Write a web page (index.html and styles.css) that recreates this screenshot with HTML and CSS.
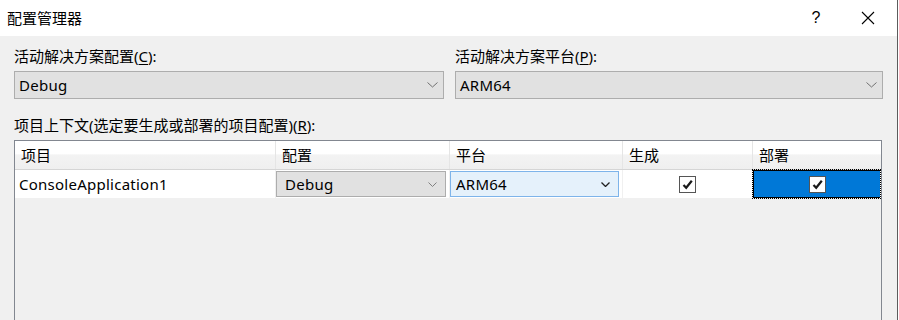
FILE: index.html
```html
<!doctype html>
<html lang="zh-CN">
<head>
    <meta charset="UTF-8">
    <title>配置管理器</title>
    <link rel="stylesheet" href="styles.css">
</head>
<body>
<div class="window">
    <div class="titlebar">
        <span class="title">配置管理器</span>
        <span class="tb-btn help">?</span>
        <span class="tb-btn close">
            <svg width="14" height="14" viewBox="0 0 14 14"><path d="M1 1 L13 13 M13 1 L1 13" stroke="#000" stroke-width="1.1" fill="none"/></svg>
        </span>
    </div>

    <div class="content">
        <div class="top-row">
            <div class="field">
                <label class="lbl">活动解决方案配置(<u>C</u>):</label>
                <div class="combo">
                    <span>Debug</span>
                    <svg class="chev" width="11" height="6" viewBox="0 0 11 6"><path d="M0.5 0.5 L5.5 5 L10.5 0.5" stroke="#707070" fill="none"/></svg>
                </div>
            </div>
            <div class="field">
                <label class="lbl">活动解决方案平台(<u>P</u>):</label>
                <div class="combo">
                    <span>ARM64</span>
                    <svg class="chev" width="11" height="6" viewBox="0 0 11 6"><path d="M0.5 0.5 L5.5 5 L10.5 0.5" stroke="#707070" fill="none"/></svg>
                </div>
            </div>
        </div>

        <label class="lbl ctx">项目上下文(选定要生成或部署的项目配置)(<u>R</u>):</label>

        <div class="grid">
            <div class="row head">
                <div class="cell">项目</div>
                <div class="cell">配置</div>
                <div class="cell">平台</div>
                <div class="cell">生成</div>
                <div class="cell">部署</div>
            </div>
            <div class="row data">
                <div class="cell name">ConsoleApplication1</div>
                <div class="cell">
                    <div class="dd">
                        <span>Debug</span>
                        <svg width="9" height="5" viewBox="0 0 9 5"><path d="M0.5 0.5 L4.5 4.5 L8.5 0.5" stroke="#808080" fill="none"/></svg>
                    </div>
                </div>
                <div class="cell">
                    <div class="dd hot">
                        <span>ARM64</span>
                        <svg width="9" height="5" viewBox="0 0 9 5"><path d="M0.5 0.5 L4.5 4.5 L8.5 0.5" stroke="#202020" stroke-width="1.3" fill="none"/></svg>
                    </div>
                </div>
                <div class="cell check">
                    <span class="box">
                        <svg width="13" height="13" viewBox="0 0 13 13"><path d="M2.5 7 L5.2 9.8 L10.8 2.8" stroke="#1a1a1a" stroke-width="2.2" fill="none"/></svg>
                    </span>
                </div>
                <div class="cell check selected">
                    <span class="box">
                        <svg width="13" height="13" viewBox="0 0 13 13"><path d="M2.5 7 L5.2 9.8 L10.8 2.8" stroke="#1a1a1a" stroke-width="2.2" fill="none"/></svg>
                    </span>
                </div>
            </div>
        </div>
    </div>
</div>
</body>
</html>
```

FILE: styles.css
```css
html, body {
    margin: 0;
    padding: 0;
    background: #fff;
}
body {
    font-family: "Noto Sans", "Noto Sans CJK SC", sans-serif;
    font-size: 15px;
    color: #000;
    width: 899px;
    height: 320px;
    overflow: hidden;
}
.name, .combo span, .dd span {
    letter-spacing: 0.25px;
}
u {
    text-decoration-thickness: 1px;
    text-underline-offset: 2px;
}

.window {
    width: 898px;
    height: 320px;
    box-sizing: border-box;
    border-right: 1px solid #5c5c5c;
    background: #f0f0f0;
    display: flex;
    flex-direction: column;
}

/* title bar */
.titlebar {
    height: 36px;
    flex: none;
    background: #fff;
    display: flex;
    align-items: center;
    padding-left: 7px;
}
.title {
    flex: 1;
    line-height: 20px;
}
.tb-btn {
    width: 56px;
    display: flex;
    justify-content: center;
    align-items: center;
}
.help {
    font-family: "Liberation Sans", sans-serif;
    font-size: 16px;
    margin-right: -4px;
}
.close {
    margin-right: 1px;
}

/* body */
.content {
    flex: 1;
    display: flex;
    flex-direction: column;
    padding: 10px 14px 0 14px;
}
.top-row {
    display: flex;
    gap: 11px;
}
.field {
    display: flex;
    flex-direction: column;
    gap: 5px;
}
.field:first-child {
    width: 430px;
}
.field:last-child {
    width: 428px;
}
.lbl {
    display: block;
    line-height: 20px;
    height: 20px;
}
.combo {
    height: 28px;
    box-sizing: border-box;
    border: 1px solid #adadad;
    background: #e1e1e1;
    display: flex;
    align-items: center;
    justify-content: space-between;
    padding: 0 5px 0 4px;
}
.ctx {
    margin-top: 16px;
}

/* data grid */
.grid {
    margin-top: 5px;
    width: 868px;
    flex: 1;
    box-sizing: border-box;
    border: 1px solid #828790;
    border-bottom: none;
}
.row {
    display: grid;
    grid-template-columns: 261px 174px 173px 130px 1fr;
}
.head {
    height: 29px;
    box-sizing: border-box;
    border-bottom: 1px solid #d5d5d5;
    background: linear-gradient(#ffffff 0%, #ffffff 45%, #f3f3f3 50%, #efefef 100%);
}
.head .cell {
    border-right: 1px solid #e5e5e5;
    padding-left: 6px;
    line-height: 28px;
}
.head .cell:last-child {
    border-right: none;
}
.data {
    height: 29px;
    box-sizing: border-box;
    background: #fff;
    border-bottom: 1px solid #f0f0f0;
}
.data .cell {
    border-right: 1px solid #f0f0f0;
    display: flex;
    align-items: center;
}
.data .cell:last-child {
    border-right: none;
}
.name {
    padding-left: 4px;
}
.dd {
    width: 170px;
    height: 26px;
    box-sizing: border-box;
    border: 1px solid #adadad;
    background: #e1e1e1;
    display: flex;
    align-items: center;
    justify-content: space-between;
    padding: 0 8px 0 8px;
}
.dd.hot {
    width: 169px;
    border-color: #7eb4ea;
    background: #e5f1fb;
    padding-left: 5px;
}
.check {
    justify-content: center;
}
.box {
    width: 15px;
    height: 15px;
    border: 1px solid #555;
    background: #fff;
    display: flex;
    align-items: center;
    justify-content: center;
}
.selected {
    background: #0078d7;
    border: 1px solid #000;
    outline: 1px dotted #000;
    outline-offset: 0;
    margin-right: 1px;
}
```
